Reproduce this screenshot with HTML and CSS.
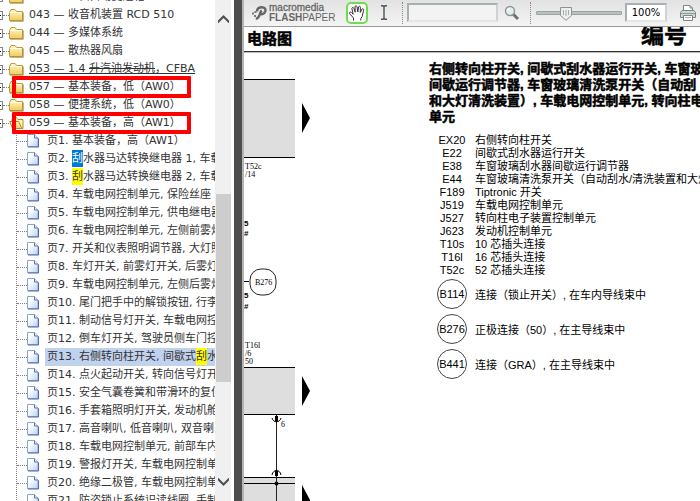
FILE: index.html
```html
<!DOCTYPE html>
<html lang="zh-CN">
<head>
    <meta charset="UTF-8">
    <meta name="viewport" content="width=device-width, initial-scale=1.0">
    <title>电路图</title>
    <link rel="stylesheet" href="styles.css">
</head>
<body>
    <!-- Shared icons -->
    <svg class="sprite" aria-hidden="true">
        <defs>
            <linearGradient id="gold" x1="0" y1="0" x2="0" y2="1">
                <stop offset="0" stop-color="#fffbd0"/>
                <stop offset="1" stop-color="#f2cc58"/>
            </linearGradient>
            <linearGradient id="sheet" x1="0" y1="0" x2="1" y2="1">
                <stop offset="0.3" stop-color="#ffffff"/>
                <stop offset="1" stop-color="#b4d2f8"/>
            </linearGradient>
        </defs>
        <symbol id="folder" viewBox="0 0 15 14">
            <path d="M0.5 4.5L2 1.5H6L7.5 3.5H13.5V12.5H0.5Z" fill="url(#gold)" stroke="#c09a3a"/>
            <path d="M1.5 4.5H12.5" stroke="#fffdf0"/>
            <path d="M1 13.3H14.3V4.5" fill="none" stroke="#7d6424" stroke-opacity="0.6"/>
        </symbol>
        <symbol id="folder-open" viewBox="0 0 15 14">
            <path d="M3 10V3.5L4.5 1.5H7.5L9 3.5H14V12.5H4Z" fill="#fff3ae" stroke="#b08a2c"/>
            <path d="M0.8 5.5H9.5L13 12.5H3.5Z" fill="url(#gold)" stroke="#b08a2c"/>
        </symbol>
        <symbol id="page" viewBox="0 0 12 14">
            <path d="M0.5 0.5H7.5L11 4V12.5H0.5Z" fill="url(#sheet)" stroke="#8ba3d4"/>
            <path d="M7.5 0.5V4H11" fill="#dce9fb" stroke="#5c74b4"/>
            <path d="M1 13H11.5V4.5" fill="none" stroke="#5468a4"/>
        </symbol>
    </svg>

    <div class="viewer">
        <nav class="sidebar">
            <div class="tree-view">
                <ul class="tree">
                    <li><a class="node" href="#"><span class="expander"></span><svg class="folder"><use href="#folder"/></svg><span>042 — 6 档自动变速箱</span></a></li>
                    <li><a class="node" href="#"><span class="expander"></span><svg class="folder"><use href="#folder"/></svg><span>043 — 收音机装置 RCD 510</span></a></li>
                    <li><a class="node" href="#"><span class="expander"></span><svg class="folder"><use href="#folder"/></svg><span>044 — 多媒体系统</span></a></li>
                    <li><a class="node" href="#"><span class="expander"></span><svg class="folder"><use href="#folder"/></svg><span>045 — 散热器风扇</span></a></li>
                    <li><a class="node hovered" href="#"><span class="expander"></span><svg class="folder"><use href="#folder"/></svg><span>053 — 1.4 <span class="struck">升汽油发动机</span>，CFBA</span></a></li>
                    <li><a class="node marked" href="#"><span class="expander"></span><svg class="folder"><use href="#folder"/></svg><span>057 — 基本装备，低（AW0）</span></a></li>
                    <li><a class="node" href="#"><span class="expander"></span><svg class="folder"><use href="#folder"/></svg><span>058 — 便捷系统，低（AW0）</span></a></li>
                    <li>
                        <a class="node marked" href="#"><span class="expander"></span><svg class="folder"><use href="#folder-open"/></svg><span>059 — 基本装备，高（AW1）</span></a>
                        <ul class="pages">
                            <li><a class="leaf" href="#"><svg class="page"><use href="#page"/></svg><span class="label">页1. 基本装备，高（AW1）</span></a></li>
                            <li><a class="leaf" href="#"><svg class="page"><use href="#page"/></svg><span class="label">页2. <mark class="current">刮</mark>水器马达转换继电器 1, 车载</span></a></li>
                            <li><a class="leaf" href="#"><svg class="page"><use href="#page"/></svg><span class="label">页3. <mark>刮</mark>水器马达转换继电器 2, 车载</span></a></li>
                            <li><a class="leaf" href="#"><svg class="page"><use href="#page"/></svg><span class="label">页4. 车载电网控制单元, 保险丝座</span></a></li>
                            <li><a class="leaf" href="#"><svg class="page"><use href="#page"/></svg><span class="label">页5. 车载电网控制单元, 供电继电器</span></a></li>
                            <li><a class="leaf" href="#"><svg class="page"><use href="#page"/></svg><span class="label">页6. 车载电网控制单元, 左侧前雾灯</span></a></li>
                            <li><a class="leaf" href="#"><svg class="page"><use href="#page"/></svg><span class="label">页7. 开关和仪表照明调节器, 大灯照</span></a></li>
                            <li><a class="leaf" href="#"><svg class="page"><use href="#page"/></svg><span class="label">页8. 车灯开关, 前雾灯开关, 后雾灯</span></a></li>
                            <li><a class="leaf" href="#"><svg class="page"><use href="#page"/></svg><span class="label">页9. 车载电网控制单元, 左侧后雾灯</span></a></li>
                            <li><a class="leaf" href="#"><svg class="page"><use href="#page"/></svg><span class="label">页10. 尾门把手中的解锁按钮, 行李</span></a></li>
                            <li><a class="leaf" href="#"><svg class="page"><use href="#page"/></svg><span class="label">页11. 制动信号灯开关, 车载电网控</span></a></li>
                            <li><a class="leaf" href="#"><svg class="page"><use href="#page"/></svg><span class="label">页12. 倒车灯开关, 驾驶员侧车门控</span></a></li>
                            <li><a class="leaf selected" href="#"><svg class="page"><use href="#page"/></svg><span class="label">页13. 右侧转向柱开关, 间歇式<mark>刮</mark>水</span></a></li>
                            <li><a class="leaf" href="#"><svg class="page"><use href="#page"/></svg><span class="label">页14. 点火起动开关, 转向信号灯开</span></a></li>
                            <li><a class="leaf" href="#"><svg class="page"><use href="#page"/></svg><span class="label">页15. 安全气囊卷簧和带滑环的复位</span></a></li>
                            <li><a class="leaf" href="#"><svg class="page"><use href="#page"/></svg><span class="label">页16. 手套箱照明灯开关, 发动机舱</span></a></li>
                            <li><a class="leaf" href="#"><svg class="page"><use href="#page"/></svg><span class="label">页17. 高音喇叭, 低音喇叭, 双音喇</span></a></li>
                            <li><a class="leaf" href="#"><svg class="page"><use href="#page"/></svg><span class="label">页18. 车载电网控制单元, 前部车内</span></a></li>
                            <li><a class="leaf" href="#"><svg class="page"><use href="#page"/></svg><span class="label">页19. 警报灯开关, 车载电网控制单</span></a></li>
                            <li><a class="leaf" href="#"><svg class="page"><use href="#page"/></svg><span class="label">页20. 绝缘二极管, 车载电网控制单</span></a></li>
                            <li><a class="leaf" href="#"><svg class="page"><use href="#page"/></svg><span class="label">页21. 防盗锁止系统识读线圈, 手制</span></a></li>
                        </ul>
                    </li>
                </ul>
            </div>
            <div class="scrollbar">
                <button class="scroll-button" aria-label="向上滚动"><svg width="11" height="8" viewBox="0 0 11 8"><path d="M0 5.5L5.5 0L11 5.5V8.5L5.5 3L0 8.5Z" fill="#505050"/></svg></button>
                <div class="scroll-track"><div class="scroll-thumb"></div></div>
                <button class="scroll-button" aria-label="向下滚动"><svg width="11" height="8" viewBox="0 0 11 8"><path d="M0 2.5L5.5 8L11 2.5V-0.5L5.5 5L0 -0.5Z" fill="#505050"/></svg></button>
            </div>
        </nav>

        <main class="paper">
            <div class="toolbar">
                <div class="brand">
                    <svg width="15" height="14" viewBox="0 0 15 14">
                        <path d="M5 5.5C5 2.6 7 1.2 9.8 1.2C12.6 1.2 14 2.8 13.3 5.3C12.6 7.8 10.4 8.6 7.5 8.3M9.7 4.5C8.6 5.5 8.2 7.6 7 10.2C6.3 11.7 5.3 12.6 3.8 12.6" fill="none" stroke="#666" stroke-width="2.4"/>
                        <path d="M0 6.5h2v2h-2zM2.5 5h2v2h-2zM2 9h2v2h-2z" fill="#777"/>
                    </svg>
                    <div class="brand-name">
                        <span class="brand-company">macromedia</span>
                        <span class="brand-product"><b>FLASH</b>PAPER</span>
                    </div>
                </div>
                <button class="tool active" aria-label="手形工具">
                    <svg width="18" height="18" viewBox="0 0 18 18">
                        <path d="M5.5 16.5V14L1.5 9.5C1 8.2 2.4 7.6 3.4 8.6L5.2 10.3L3.9 4.6C3.8 3.2 5.4 3 5.8 4.2L7.2 8.2L7 2.8C7.1 1.4 8.8 1.4 9 2.7L9.8 8L10.6 3C11 1.8 12.5 2.1 12.4 3.4L12.3 8.4L13.9 5.2C14.6 4.2 16 4.9 15.6 6.2L14.2 12.5L12.8 14.5V16.5" fill="#fff" stroke="#333"/>
                    </svg>
                </button>
                <button class="tool" aria-label="选择文本">
                    <svg width="8" height="15" viewBox="0 0 8 15"><path d="M1 0.8H3L4 1.8L5 0.8H7M4 1.5V13.5M1 14.2H3L4 13.2L5 14.2H7" fill="none" stroke="#45545a" stroke-width="1.4"/></svg>
                </button>
                <span class="separator"></span>
                <input class="field search-field" type="text" aria-label="查找">
                <button class="tool" aria-label="搜索">
                    <svg width="16" height="16" viewBox="0 0 16 16">
                        <path d="M9 9L14 14" stroke="#6b7474" stroke-width="3"/>
                        <circle cx="6" cy="6" r="4.5" fill="#e4eded" stroke="#8b9595" stroke-width="1.4"/>
                        <path d="M3.5 6A2.5 2.5 0 0 1 6 3.5" fill="none" stroke="#fff"/>
                    </svg>
                </button>
                <span class="separator"></span>
                <input class="zoom-slider" type="range" min="0" max="100" value="32" aria-label="缩放">
                <input class="field zoom-field" type="text" value="100%" aria-label="缩放比例">
                <button class="tool print" aria-label="打印">
                    <svg width="18" height="18" viewBox="0 0 18 18">
                        <path d="M4.5 7V1.5H11L13.5 4V7" fill="#fff" stroke="#7b8585"/>
                        <path d="M11 1.5V4H13.5" fill="none" stroke="#7b8585"/>
                        <path d="M1.5 13.5V8.5L3 6.5H15L16.5 8.5V13.5Z" fill="#d3d9d9" stroke="#7b8585"/>
                        <path d="M2 9.5H16" stroke="#8e9898"/>
                        <path d="M4.5 11.5H13.5V16.5H4.5Z" fill="#fff" stroke="#7b8585"/>
                        <path d="M6 13.5H12" stroke="#aab2b2"/>
                    </svg>
                </button>
            </div>

            <header class="paper-header">
                <h1>电路图</h1>
                <div class="number">编号</div>
            </header>

            <div class="content">
                <!-- Right edge of the wiring diagram -->
                <svg class="diagram" width="70" height="449" viewBox="0 0 70 449">
                    <g fill="#dedede">
                        <rect x="0" y="27" width="51" height="79"/>
                        <rect x="0" y="315" width="51" height="48"/>
                        <rect x="0" y="425" width="51" height="24"/>
                    </g>
                    <path d="M0 27.5H51M0 105.5H51M0 315.5H51M0 362.5H51M0 425.5H51M0 431.5H51M0 229.5H5" stroke="#000"/>
                    <path d="M58 51L66 66L58 81ZM58 324L66 339L58 354ZM58 433L66 448V449H58Z"/>
                    <rect x="6" y="217" width="26" height="26" rx="11" fill="none" stroke="#222"/>
                    <path d="M32.5 363V449" stroke="#222"/>
                    <path d="M28 366C29 371 36 371 37 366M28 423C29 417 36 417 37 423" fill="none" stroke="#000"/>
                    <path d="M31 364h3v5h-3zM31 419h3v5h-3z"/>
                    <circle cx="32.5" cy="431.5" r="2"/>
                    <g class="wire-text">
                        <text x="1" y="117">T52c</text>
                        <text x="1" y="125">/14</text>
                        <text x="11" y="233">B276</text>
                        <text x="1" y="296">T16l</text>
                        <text x="1" y="304">/6</text>
                        <text x="1" y="312">50</text>
                        <text x="37" y="375">6</text>
                    </g>
                    <g class="wire-size">
                        <text x="0" y="174">5</text>
                        <text x="0" y="184">#</text>
                        <text x="0" y="246">5</text>
                        <text x="0" y="257">#</text>
                    </g>
                </svg>

                <section class="info">
                    <h2>右侧转向柱开关, 间歇式刮水器运行开关, 车窗玻<br>间歇运行调节器, 车窗玻璃清洗泵开关（自动刮<br>和大灯清洗装置）, 车载电网控制单元, 转向柱电<br>单元</h2>
                    <table class="legend">
                        <tr><th>EX20</th><td>右侧转向柱开关</td></tr>
                        <tr><th>E22</th><td>间歇式刮水器运行开关</td></tr>
                        <tr><th>E38</th><td>车窗玻璃刮水器间歇运行调节器</td></tr>
                        <tr><th>E44</th><td>车窗玻璃清洗泵开关（自动刮水/清洗装置和大灯</td></tr>
                        <tr><th>F189</th><td>Tiptronic 开关</td></tr>
                        <tr><th>J519</th><td>车载电网控制单元</td></tr>
                        <tr><th>J527</th><td>转向柱电子装置控制单元</td></tr>
                        <tr><th>J623</th><td>发动机控制单元</td></tr>
                        <tr><th>T10s</th><td>10 芯插头连接</td></tr>
                        <tr><th>T16l</th><td>16 芯插头连接</td></tr>
                        <tr><th>T52c</th><td>52 芯插头连接</td></tr>
                    </table>
                    <ul class="joints">
                        <li><span class="joint">B114</span>连接（锁止开关）, 在车内导线束中</li>
                        <li><span class="joint">B276</span>正极连接（50）, 在主导线束中</li>
                        <li><span class="joint">B441</span>连接（GRA）, 在主导线束中</li>
                    </ul>
                </section>
            </div>
        </main>
    </div>
</body>
</html>
```

FILE: styles.css
```css
* {
    box-sizing: border-box;
}

body {
    margin: 0;
    height: 100vh;
    overflow: hidden;
    background-color: #fff;
    font-family: "DejaVu Sans", "Noto Sans CJK SC", sans-serif;
    font-size: 11px;
}

ul {
    margin: 0;
    padding: 0;
    list-style: none;
}

button {
    padding: 0;
    border: none;
    background: none;
}

.sprite {
    position: absolute;
    width: 0;
    height: 0;
}

.viewer {
    display: flex;
    height: 100vh;
}

/* Sidebar */
.sidebar {
    display: flex;
    flex: 0 0 244px;
    min-width: 0;
    border-right: 2px solid #b4b4b4;
    box-shadow: inset -8px 0 0 #4d4d4d;
    padding-right: 8px;
}

.tree-view {
    flex: 1;
    min-width: 0;
    overflow: hidden;
}

/* The tree is scrolled a little down and to the right */
.tree {
    margin: -12px 0 0 -6px;
    white-space: nowrap;
}

.node,
.leaf {
    display: flex;
    align-items: center;
    height: 18px;
    line-height: 18px;
    color: #333;
    text-decoration: none;
}

.node {
    position: relative;
    width: max-content;
}

.expander {
    width: 9px;
    height: 9px;
    margin-right: 6px;
    border: 1px solid #848484;
    background: linear-gradient(#000, #000) center / 5px 1px no-repeat;
}

.expander::after {
    content: "";
    display: block;
    width: 6px;
    margin: 3px 0 0 8px;
    border-top: 1px dotted #808080;
}

.folder {
    width: 15px;
    height: 14px;
    margin-right: 5px;
}

.hovered {
    text-decoration: underline;
}

.struck {
    text-decoration: line-through;
}

/* Red frame over an entry */
.marked::after {
    content: "";
    position: absolute;
    inset: -2px -10px -2px 18px;
    border: 4px solid #fe0000;
    border-radius: 1px;
}

.pages {
    margin-left: 22px;
    border-left: 1px dotted #808080;
}

.leaf::before {
    content: "";
    flex: none;
    width: 10px;
    border-top: 1px dotted #808080;
}

.page {
    flex: none;
    width: 12px;
    height: 14px;
    margin-right: 6px;
}

.label {
    flex: 1;
    padding-left: 2px;
}

.selected .label {
    background-color: #c1d2ee;
}

mark {
    display: inline-block;
    height: 17px;
    background-color: #ff0;
    color: #333;
}

mark.current {
    background-color: #0078d7;
    color: #fff;
}

.scrollbar {
    display: flex;
    flex: 0 0 17px;
    flex-direction: column;
    border-left: 1px solid #f0f0f0;
    border-right: 1px solid #fff;
    margin-right: 2px;
    background-color: #f0f0f0;
}

.scroll-button {
    display: flex;
    flex: 0 0 38px;
    align-items: center;
    justify-content: center;
}

.scroll-track {
    flex: 1;
    padding-top: 156px;
}

.scroll-thumb {
    height: 70%;
    background-color: #cdcdcd;
}

/* Document */
.paper {
    display: flex;
    flex: 1;
    flex-direction: column;
    min-width: 0;
    overflow: hidden;
    font-family: "Liberation Sans", "Noto Sans CJK SC", sans-serif;
    color: #000;
}

.toolbar {
    display: flex;
    flex: 0 0 27px;
    align-items: center;
    padding: 0 2px 1px 8px;
    border-bottom: 1px solid #999;
    background: linear-gradient(#e2e2e2, #f4f4f4);
}

.brand {
    display: flex;
    flex: 0 0 94px;
    align-items: center;
    gap: 2px;
    color: #666;
}

.brand-name {
    display: flex;
    flex-direction: column;
    font-size: 10px;
    line-height: 10px;
}

.brand-company {
    -webkit-text-stroke: 0.3px #666;
}

.tool {
    display: flex;
    flex: 0 0 28px;
    align-items: center;
    justify-content: center;
    height: 22px;
}

.tool.active {
    flex-basis: 22px;
    margin-right: 2px;
    border: 2px solid #6fdc4f;
    border-radius: 5px;
    background-color: #fff;
}

.separator {
    height: 22px;
    margin: 0 4px;
    border-left: 1px dotted #888;
}

.field {
    height: 19px;
    margin: 0;
    padding: 0 2px;
    border: 2px solid #a6b0b0;
    border-right-color: #cdd3d3;
    border-bottom-color: #e2e6e6;
    background-color: #f3f3f3;
}

.search-field {
    flex: 1 1 94px;
    min-width: 0;
}

.zoom-slider {
    flex: 0 0 86px;
    height: 16px;
    min-width: 0;
    margin: 0 3px 0 1px;
    background: none;
    -webkit-appearance: none;
    appearance: none;
}

.zoom-slider::-webkit-slider-runnable-track {
    height: 4px;
    border: 1px solid #9aa4a4;
    border-radius: 1px;
    background-color: #b9c1c1;
}

.zoom-slider::-webkit-slider-thumb {
    -webkit-appearance: none;
    width: 12px;
    height: 14px;
    margin-top: -5px;
    background: url("data:image/svg+xml,%3Csvg xmlns='http://www.w3.org/2000/svg' width='12' height='14'%3E%3Cpath d='M0.5 0.5H11.5V8.5L6 13.3L0.5 8.5Z' fill='%23eef0f0' stroke='%238b9595'/%3E%3Cpath d='M3.5 3V8M6 3V9M8.5 3V8' stroke='%23a4adad'/%3E%3C/svg%3E");
}

.zoom-field {
    flex: 0 0 42px;
    width: 42px;
    background-color: #fff;
    font-family: "DejaVu Sans", sans-serif;
    font-size: 10px;
    text-align: center;
}

.print {
    flex-basis: 20px;
    margin-left: 11px;
}

.paper-header {
    display: flex;
    flex: 0 0 25px;
    align-items: center;
    justify-content: space-between;
    padding: 0 13px 0 3px;
    overflow: hidden;
    border-bottom: 1px solid #333;
    box-shadow: 0 1px 0 #bbb;
    font-weight: bold;
    -webkit-text-stroke: 0.5px #000;
}

h1 {
    margin: 0;
    font-size: 15px;
    line-height: 24px;
}

.number {
    margin-top: -8px;
    font-size: 23px;
    line-height: 24px;
}

.content {
    display: grid;
    grid-template-columns: 185px 1fr;
    white-space: nowrap;
}

.wire-text {
    font-family: "Liberation Serif", serif;
    font-size: 8px;
}

.wire-size {
    font-size: 8px;
    font-weight: bold;
}

.info {
    min-width: 0;
    padding-top: 9px;
    overflow: hidden;
}

h2 {
    margin: 0 0 9px;
    font-size: 13px;
    line-height: 16px;
    -webkit-text-stroke: 0.5px #000;
}

.legend {
    border-collapse: collapse;
    line-height: 13px;
}

.legend th {
    min-width: 46px;
    padding: 0;
    font-weight: normal;
    text-align: center;
}

.legend td {
    padding: 0;
}

.joints {
    display: flex;
    flex-direction: column;
    gap: 5px;
    margin-top: 2px;
}

.joints li {
    display: flex;
    align-items: center;
}

.joint {
    width: 30px;
    height: 30px;
    margin: 0 8px;
    border: 1px solid #444;
    border-radius: 50%;
    display: flex;
    align-items: center;
    justify-content: center;
}
```
